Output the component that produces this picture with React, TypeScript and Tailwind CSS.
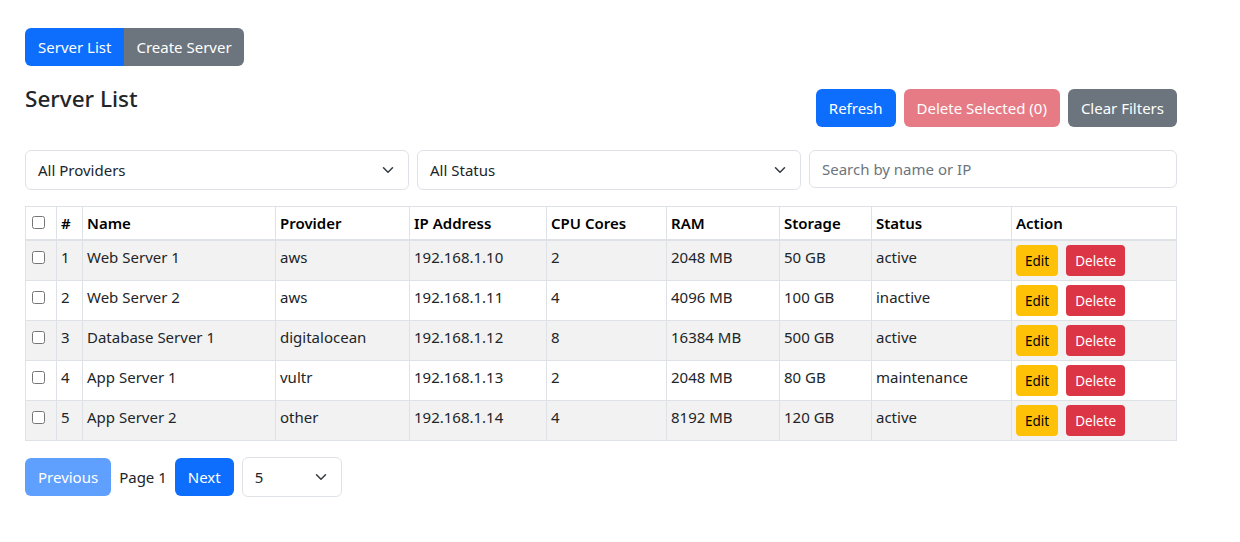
import React from "react";

const rows = [
  { id: 1, name: "Web Server 1", provider: "aws", ip: "192.168.1.10", cpu: 2, ram: "2048 MB", storage: "50 GB", status: "active" },
  { id: 2, name: "Web Server 2", provider: "aws", ip: "192.168.1.11", cpu: 4, ram: "4096 MB", storage: "100 GB", status: "inactive" },
  { id: 3, name: "Database Server 1", provider: "digitalocean", ip: "192.168.1.12", cpu: 8, ram: "16384 MB", storage: "500 GB", status: "active" },
  { id: 4, name: "App Server 1", provider: "vultr", ip: "192.168.1.13", cpu: 2, ram: "2048 MB", storage: "80 GB", status: "maintenance" },
  { id: 5, name: "App Server 2", provider: "other", ip: "192.168.1.14", cpu: 4, ram: "8192 MB", storage: "120 GB", status: "active" },
];

function Chevron() {
  return (
    <svg width="16" height="12" viewBox="0 0 16 16" fill="none" stroke="#343a40" strokeWidth="2" strokeLinecap="round" strokeLinejoin="round">
      <path d="m2 5 6 6 6-6" />
    </svg>
  );
}

function Select({ label, className }: { label: string; className: string }) {
  return (
    <div className={`flex items-center justify-between h-[40px] border border-[#dee2e6] rounded-[6px] bg-white pl-[12px] pr-[12px] text-[#212529] ${className}`}>
      <span>{label}</span>
      <Chevron />
    </div>
  );
}

const th = "border border-[#dee2e6] border-b-2 border-b-[#dee2e6] px-[4px] py-[4px] text-left font-semibold text-black align-top";
const td = "border border-[#dee2e6] px-[4px] py-[4px] align-top";

export default function App() {
  return (
    <div className="w-[1240px] h-[542px] bg-white text-[#212529] text-[15px] leading-[24px]" style={{ fontFamily: "'Noto Sans', 'Open Sans', sans-serif" }}>
      <div className="pl-[25px] w-[1177px] pt-[28px]">
        <div className="flex">
          <div className="flex h-[38px] rounded-[6px] overflow-hidden text-white">
            <div className="bg-[#0d6efd] px-[13px] flex items-center">Server List</div>
            <div className="bg-[#6c757d] px-[12px] flex items-center">Create Server</div>
          </div>
        </div>
        <div className="flex justify-between items-start mt-[18px]">
          <h4 className="text-[22.5px] leading-[29px] font-medium text-[#212529]">Server List</h4>
          <div className="flex gap-[8px] mt-[5px]">
            <div className="h-[38px] px-[13px] flex items-center rounded-[6px] bg-[#0d6efd] text-white">Refresh</div>
            <div className="h-[38px] px-[13px] flex items-center rounded-[6px] bg-[#e77b85] text-white">Delete Selected (0)</div>
            <div className="h-[38px] px-[13px] flex items-center rounded-[6px] bg-[#6c757d] text-white">Clear Filters</div>
          </div>
        </div>
        <div className="flex gap-[8px] mt-[23px]">
          <Select label="All Providers" className="w-[384px]" />
          <Select label="All Status" className="w-[384px]" />
          <div className="w-[368px] h-[38px] border border-[#dee2e6] rounded-[6px] flex items-center px-[12px] text-[#6c757d]">Search by name or IP</div>
        </div>
        <table className="mt-[16px] w-[1151px] table-fixed border-collapse">
          <colgroup>
            <col style={{ width: 31 }} />
            <col style={{ width: 26 }} />
            <col style={{ width: 193 }} />
            <col style={{ width: 134 }} />
            <col style={{ width: 137 }} />
            <col style={{ width: 120 }} />
            <col style={{ width: 113 }} />
            <col style={{ width: 92 }} />
            <col style={{ width: 140 }} />
            <col style={{ width: 165 }} />
          </colgroup>
          <thead>
            <tr>
              <th className={th}><input type="checkbox" className="ml-[2px] mt-[5px] align-top w-[13px] h-[13px]" /></th>
              <th className={th}>#</th>
              <th className={th}>Name</th>
              <th className={th}>Provider</th>
              <th className={th}>IP Address</th>
              <th className={th}>CPU Cores</th>
              <th className={th}>RAM</th>
              <th className={th}>Storage</th>
              <th className={th}>Status</th>
              <th className={th}>Action</th>
            </tr>
          </thead>
          <tbody>
            {rows.map((r, i) => (
              <tr key={r.id} className={i % 2 === 0 ? "bg-[#f2f2f2]" : "bg-white"}>
                <td className={td}><input type="checkbox" className="ml-[2px] mt-[6px] align-top w-[13px] h-[13px]" /></td>
                <td className={td}>{r.id}</td>
                <td className={td}>{r.name}</td>
                <td className={td}>{r.provider}</td>
                <td className={td}>{r.ip}</td>
                <td className={td}>{r.cpu}</td>
                <td className={td}>{r.ram}</td>
                <td className={td}>{r.storage}</td>
                <td className={td}>{r.status}</td>
                <td className={td}>
                  <div className="flex gap-[8px]">
                    <div className="h-[31px] px-[9px] flex items-center rounded-[4px] bg-[#ffc107] text-black text-[13.5px]">Edit</div>
                    <div className="h-[31px] px-[9px] flex items-center rounded-[4px] bg-[#dc3545] text-white text-[13.5px]">Delete</div>
                  </div>
                </td>
              </tr>
            ))}
          </tbody>
        </table>
        <div className="flex items-center gap-[8px] mt-[16px]">
          <div className="h-[38px] px-[13px] flex items-center rounded-[6px] bg-[#5fa0fe] text-white">Previous</div>
          <span>Page 1</span>
          <div className="h-[38px] px-[13px] flex items-center rounded-[6px] bg-[#0d6efd] text-white">Next</div>
          <Select label="5" className="w-[100px]" />
        </div>
      </div>
    </div>
  );
}
